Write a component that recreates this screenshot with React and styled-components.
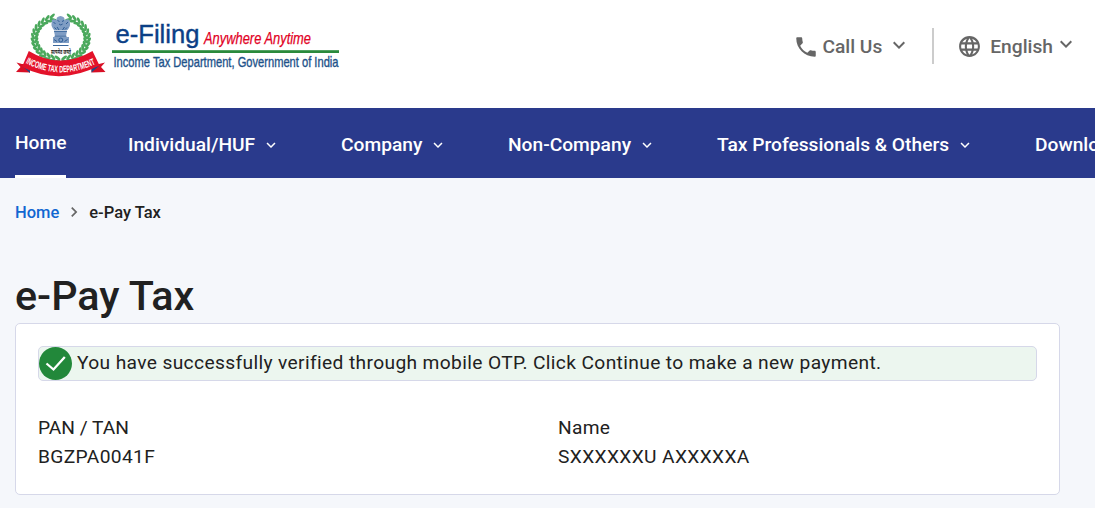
import React from "react";
import styled, { createGlobalStyle } from "styled-components";
import {
  MdPhone,
  MdLanguage,
  MdExpandMore,
  MdChevronRight,
} from "react-icons/md";

const menus = [
  { label: "Individual/HUF", width: 128 },
  { label: "Company", width: 82 },
  { label: "Non-Company", width: 124 },
  { label: "Tax Professionals & Others", width: 233 },
  { label: "Downloads", width: 90 },
];

const details = [
  { label: "PAN / TAN", value: "BGZPA0041F", tight: true },
  { label: "Name", value: "SXXXXXXU AXXXXXA" },
];

// leaves of the wreath, going up one side from the bottom
const leaves = Array.from({ length: 15 }, (_, i) => {
  const t = ((100 + i * 11) * Math.PI) / 180;
  return {
    x: 26.3 * Math.cos(t),
    y: 21.5 * Math.sin(t),
    deg: 100 + i * 11 + 90,
  };
});

const Wreath = () => (
  <g>
    {leaves.map((leaf) => (
      <g
        key={leaf.deg}
        transform={`translate(${leaf.x} ${leaf.y}) rotate(${leaf.deg})`}
      >
        <ellipse cx="0" cy="-2" rx="3.4" ry="1.4" transform="rotate(-28)" />
        <ellipse cx="0" cy="2" rx="3.4" ry="1.4" transform="rotate(28)" />
      </g>
    ))}
  </g>
);

const Emblem = () => (
  <svg width="92" height="66" viewBox="15 12 92 66">
    <g fill="#4aa85c">
      <g transform="translate(60.8 38.3)">
        <Wreath />
      </g>
      <g transform="translate(60.8 38.3) scale(-1 1)">
        <Wreath />
      </g>
    </g>
    {/* lion capital */}
    <g fill="#7f9dc4">
      <path d="M57 17.500q3.500-3 7 0l1.500 4.500-1 8h-8l-1-8z" />
      <path d="M52 20q3-2 5 1l1 9h-4q-3-4-2.500-6z" />
      <path d="M69.500 20q-3-2-5 1l-1 9h4q3-4 2.500-6z" />
      <path d="M54 31h13l-1 5h-11z" />
      <path d="M53 37h16v6H53z" />
    </g>
    <g fill="none" stroke="#24558f" strokeWidth="0.9">
      <path d="M57.500 20.500l2 1M64 20.500l-2 1M59 24q1.800 2 3.600 0M57 27l2 3M64.500 27l-2 3M53.500 22l2 2M68 22l-2 2M54.500 27.500l2 2M67 27.500l-2 2" />
      <path d="M54 31.200h13M54.500 36.300h12" />
      <circle cx="60.800" cy="40" r="2" />
      <path d="M54 39.500l3 2M67.500 39.500l-3 2M53 45.500h15.500" />
    </g>
    <text
      x="51"
      y="53.500"
      fontSize="5.500"
      fontWeight="700"
      fill="#222"
      fontFamily='"Noto Sans", sans-serif'
      textLength="20"
      lengthAdjust="spacingAndGlyphs"
    >
      सत्यमेव जयते
    </text>
    {/* ribbon */}
    <path d="M22 64l-5.500-1.500 4 4.500-4.500 5 14 0.500V64z" fill="#d80f25" />
    <path d="M99 64l6-1.500-4 4.500 4.500 5-14 0.500V64z" fill="#d80f25" />
    <path d="M22 66l8 7V68zM99.500 65.500l-8 7V68z" fill="#1f4b86" />
    <path
      d="M28.800 51Q60 70 92.500 51L99.500 65.500Q60 86 22 67z"
      fill="#e3122a"
    />
    <path id="ribbonLine" d="M24.500 62.500Q60 82 97.500 63" fill="none" />
    <text
      fontSize="9.500"
      fontWeight="700"
      fill="#fff"
      fontFamily='"Liberation Sans Narrow", "Liberation Sans", Arial, sans-serif'
    >
      <textPath
        href="#ribbonLine"
        startOffset="1"
        textLength="73"
        lengthAdjust="spacingAndGlyphs"
      >
        INCOME TAX DEPARTMENT
      </textPath>
    </text>
  </svg>
);

const Brand = () => (
  <svg
    width="230"
    height="56"
    viewBox="111 18 230 56"
    fontFamily='"Liberation Sans", Arial, sans-serif'
  >
    <text
      x="115.500"
      y="43"
      fontSize="26"
      fill="#0b3f86"
      stroke="#0b3f86"
      strokeWidth="0.400"
      textLength="84"
      lengthAdjust="spacingAndGlyphs"
    >
      e-Filing
    </text>
    <text
      x="204"
      y="44"
      fontSize="16.500"
      fontStyle="italic"
      fill="#e2001f"
      stroke="#e2001f"
      strokeWidth="0.250"
      textLength="107"
      lengthAdjust="spacingAndGlyphs"
    >
      Anywhere Anytime
    </text>
    <rect x="112" y="50.200" width="227" height="2.800" fill="#2a8a3c" />
    <text
      x="113.500"
      y="67"
      fontSize="14.500"
      fill="#1d5289"
      stroke="#1d5289"
      strokeWidth="0.350"
      textLength="225"
      lengthAdjust="spacingAndGlyphs"
    >
      Income Tax Department, Government of India
    </text>
  </svg>
);

const CheckIcon = () => (
  <svg width="33" height="33" viewBox="0 0 33 33">
    <circle cx="16.500" cy="16.500" r="16.500" fill="#22883a" />
    <path
      d="M7.500 16.500l7 6L25.800 10"
      fill="none"
      stroke="#fff"
      strokeWidth="2.300"
    />
  </svg>
);

const App = () => {
  return (
    <>
      <GlobalStyle />
      <Header>
        <Logo>
          <Emblem />
          <Brand />
        </Logo>
        <Tools>
          <CallUs>
            <MdPhone size={26} />
            <ToolText>Call Us</ToolText>
            <MdExpandMore size={24} />
          </CallUs>
          <Divider />
          <Language>
            <MdLanguage size={25} />
            <ToolText>English</ToolText>
            <MdExpandMore size={24} />
          </Language>
        </Tools>
      </Header>

      <Nav>
        <HomeTab>Home</HomeTab>
        {menus.map((menu) => (
          <Menu key={menu.label}>
            <MenuText $width={menu.width}>{menu.label}</MenuText>
            <MdExpandMore size={18} />
          </Menu>
        ))}
      </Nav>

      <Main>
        <Breadcrumb>
          <HomeLink>Home</HomeLink>
          <MdChevronRight size={20} />
          <span>e-Pay Tax</span>
        </Breadcrumb>
        <Title>e-Pay Tax</Title>
        <Card>
          <Alert>
            <CheckIcon />
            <AlertText>
              You have successfully verified through mobile OTP. Click Continue
              to make a new payment.
            </AlertText>
          </Alert>
          <Details>
            {details.map((item) => (
              <div key={item.label}>
                <Label $tight={item.tight}>{item.label}</Label>
                <div>{item.value}</div>
              </div>
            ))}
          </Details>
        </Card>
      </Main>
    </>
  );
};

export default App;

const GlobalStyle = createGlobalStyle`
  * {
    box-sizing: border-box;
  }

  body {
    margin: 0;
    height: 508px;
    overflow: hidden;
    background-color: #f5f7fb;
    color: #212121;
    font-family: Roboto, sans-serif;
  }

  svg {
    display: block;
    flex-shrink: 0;
  }
`;

const Header = styled.header`
  height: 108px;
  padding: 12px 17px 0 15px;
  display: flex;
  justify-content: space-between;
  align-items: flex-start;
  background-color: #fff;
`;

const Logo = styled.div`
  display: flex;
  align-items: flex-start;
  gap: 4px;

  svg:last-child {
    margin-top: 6px;
  }
`;

const Tools = styled.div`
  display: flex;
  align-items: center;
  height: 36px;
  margin-top: 16px;
  color: #666;
`;

const Tool = styled.div`
  display: flex;
  align-items: center;
`;

const CallUs = styled(Tool)`
  padding-top: 1px;

  svg:last-child {
    margin: -3px 0 0 5px;
  }

  div {
    margin-left: 3px;
  }
`;

const Language = styled(Tool)`
  padding-top: 1px;

  svg:last-child {
    margin: -6px 0 0 1px;
  }

  div {
    margin-left: 8px;
  }
`;

const ToolText = styled.div`
  padding-top: 1px;
  font-size: 19.2px;
  font-weight: 500;
  line-height: 24px;
`;

const Divider = styled.div`
  width: 2px;
  height: 36px;
  margin: 0 23px 0 21px;
  background-color: #ccc;
`;

const Nav = styled.nav`
  display: flex;
  align-items: flex-start;
  height: 70px;
  padding-left: 15px;
  overflow: hidden;
  background-color: #2a3a8c;
  color: #fff;
  font-size: 19.2px;
  font-weight: 500;
  line-height: 24px;
  white-space: nowrap;
`;

const HomeTab = styled.div`
  flex-shrink: 0;
  width: 51px;
  height: 70px;
  margin-right: 62px;
  padding-top: 23px;
  border-bottom: 3px solid #fff;
`;

const Menu = styled.div`
  display: flex;
  align-items: center;
  flex-shrink: 0;
  gap: 6px;
  margin: 25px 61px 0 0;

  svg {
    margin-top: -1px;
  }
`;

const MenuText = styled.div`
  width: ${(props) => props.$width}px;
`;

const Main = styled.main`
  padding: 25px 35px 0 15px;
`;

const Breadcrumb = styled.div`
  display: flex;
  align-items: center;
  height: 20px;
  font-size: 16.5px;
  font-weight: 500;
  line-height: 20px;

  svg {
    margin: -3px 5px 0;
    color: #666;
  }
`;

const HomeLink = styled.span`
  color: #1167d1;
`;

const Title = styled.h1`
  margin: 49px 0 3px;
  font-size: 41.3px;
  font-weight: 500;
  line-height: 48px;
`;

const Card = styled.section`
  height: 172px;
  padding: 22px;
  background-color: #fff;
  border: 1px solid #d6d8e9;
  border-radius: 5px;
`;

const Alert = styled.div`
  display: flex;
  align-items: center;
  height: 35px;
  background-color: #ecf6ef;
  border: 1px solid #d6d8e9;
  border-radius: 5px;
`;

const AlertText = styled.div`
  margin: -3px 0 0 5px;
  font-size: 19.2px;
  letter-spacing: 0.36px;
  white-space: nowrap;
`;

const Details = styled.div`
  display: grid;
  grid-template-columns: 520px 1fr;
  margin-top: 32px;
  font-size: 19.2px;
  letter-spacing: 0.36px;
  line-height: 29px;
`;

const Label = styled.div`
  letter-spacing: ${(props) => (props.$tight ? "0" : "0.3px")};
`;
